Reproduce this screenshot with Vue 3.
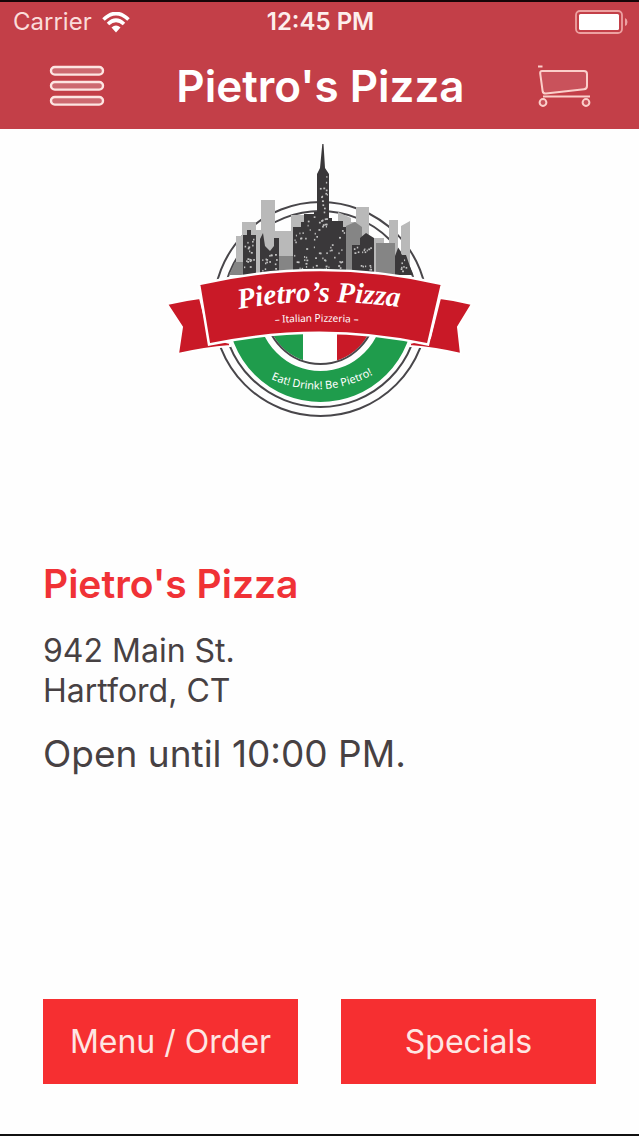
<template>
  <div class="screen">
    <header class="header">
      <div class="status">
        <div class="carrier">
          <span>Carrier</span>
          <svg class="wifi" viewBox="0 0 28 21" aria-hidden="true">
            <path d="M1.5 7.5 Q14 -4.5 26.5 7.5" fill="none" stroke="#fff" stroke-width="3.6" />
            <path d="M6 12 Q14 4.5 22 12" fill="none" stroke="#fff" stroke-width="3.6" />
            <path d="M9.5 15.6 Q14 11.6 18.5 15.6 L14 20.5 Z" fill="#fff" />
          </svg>
        </div>
        <span class="time">12:45 PM</span>
        <svg class="battery" viewBox="0 0 53 24" aria-hidden="true">
          <rect x="1" y="1" width="46" height="22" rx="4" fill="none" stroke="#eda1a1" stroke-width="1.8" />
          <rect x="4" y="4" width="40" height="16" rx="1.5" fill="#fff" />
          <path d="M50 8 Q52.5 9 52.5 12 Q52.5 15 50 16 Z" fill="#eda1a1" />
        </svg>
      </div>
      <nav class="bar">
        <button class="icon-btn" type="button" aria-label="Menu">
          <svg viewBox="0 0 56 42" width="56" height="42">
            <rect v-for="y in [2, 17, 32]" :key="y" x="2" :y="y" width="52" height="7.6" rx="3.8" />
          </svg>
        </button>
        <h1>{{ shop.name }}</h1>
        <button class="icon-btn" type="button" aria-label="Cart">
          <svg class="cart" viewBox="0 0 56 44" width="56" height="44">
            <path d="M2 2.5 H6.5" />
            <path d="M6 7 H48 Q51 7 51 10 V22 Q51 25 48 25.3 L10 29.5 Q7 29.8 6.6 27 L4.2 9.5 Q4 7 6 7 Z" />
            <path d="M7 32.5 H54" />
            <circle cx="7" cy="38.5" r="3.4" />
            <circle cx="50" cy="38.5" r="3.4" />
          </svg>
        </button>
      </nav>
    </header>

    <main class="content">
      <svg class="logo" viewBox="160 140 320 280" role="img" aria-label="Pietro's Pizza logo">
        <defs>
          <clipPath id="flagClip"><circle cx="320.5" cy="309" r="54" /></clipPath>
          <clipPath id="lower"><rect x="200" y="310" width="240" height="110" /></clipPath>
          <path id="nameArc" d="M239 309 Q320 294 420 310" />
          <path id="subArc" d="M275 323 Q320 320 385 324" />
          <path id="mottoArc" d="M271 379 Q322 402 374 374 L390 364" />
        </defs>

        <g class="rings">
          <circle cx="320.5" cy="309" r="107" />
          <circle cx="320.5" cy="309" r="98" />
        </g>

        <!-- skyline -->
        <path class="far" d="M236 275 V236 H242 V222 H256 V230 H261 V200 H275 V231 H291 V215 H304 V275 Z" />
        <path class="far" d="M338 275 V212 L351 218 V222 H356 V207 H369 V238 H384 V243 H389 V220 H398 V262 H401 V226 L410 221 V275 Z" />
        <path class="mid" d="M229 275 L235 262 H243 V275 Z M278 275 V256 H294 V275 Z M346 275 V226 L355 222 L362 227 V275 Z M376 275 V243 H395 V275 Z" />
        <path class="near" d="M243 275 V235 H247 V230 H251 V235 H256 V275 Z M260 275 V239 L263 233 L265 246 L270 251 L274 246 V238 H279 V275 Z" />
        <path class="near" d="M293 275 V227 H301 V222 H304 V214 H314 V212 H317 V174 L320 168 L322.3 144 L323.5 144 L325 168 L329 174 V218 H332 V221 H343 V227 H346 V275 Z" />
        <path class="near" d="M352 275 V245 H360 V238 L366 233 L374 238 V275 Z M395 275 V256 L398 248 L402 255 H406 L413 275 Z" />
        <g fill="#c4c4c4">
          <rect v-for="(w, i) in windows" :key="i" :x="w.x" :y="w.y" :width="w.s" height="1.7" />
        </g>

        <!-- plate with the flag -->
        <circle class="plate" cx="320.5" cy="309" r="77.5" clip-path="url(#lower)" />
        <g clip-path="url(#flagClip)">
          <rect x="262" y="315" width="41" height="60" fill="#1f9c4c" />
          <rect x="303" y="315" width="34" height="60" fill="#fff" />
          <rect x="337" y="315" width="42" height="60" fill="#c91927" />
        </g>
        <circle class="ring" cx="320.5" cy="309" r="55" clip-path="url(#lower)" />

        <!-- ribbon -->
        <path class="tail" d="M167 304 Q184 300 200 298 L210 338 L230 343 L230 346 Q204 348 178 354 L182 327 Z" />
        <path class="tail" d="M472 304 Q457 300 440 298 L430 338 L410 343 L410 346 Q436 348 461 354 L458 327 Z" />
        <path class="ribbon" d="M199 284 Q320 256 442 284 L428 344.5 Q320 321 209 344.5 Z" />

        <text class="name"><textPath href="#nameArc">Pietro’s Pizza</textPath></text>
        <text class="sub"><textPath href="#subArc">– Italian Pizzeria –</textPath></text>
        <text class="motto"><textPath href="#mottoArc">Eat! Drink! Be Pietro!</textPath></text>
      </svg>

      <section class="info">
        <h2>{{ shop.name }}</h2>
        <address>
          {{ shop.street }}<br />
          {{ shop.city }}
        </address>
        <p class="hours">{{ shop.hours }}</p>
      </section>

      <div class="actions">
        <button v-for="action in actions" :key="action" class="action" type="button">{{ action }}</button>
      </div>
    </main>
  </div>
</template>

<script setup>
const shop = {
  name: "Pietro's Pizza",
  street: '942 Main St.',
  city: 'Hartford, CT',
  hours: 'Open until 10:00 PM.'
}

const actions = ['Menu / Order', 'Specials']

// lit windows: [left, top, width, height, count] for each dark building
const buildings = [
  [244, 237, 10, 32, 18],
  [261, 252, 16, 18, 15],
  [294, 229, 50, 42, 55],
  [318, 176, 9, 50, 18],
  [305, 216, 22, 14, 8],
  [353, 246, 19, 24, 18],
  [396, 257, 10, 14, 7]
]

let seed = 7
const random = () => {
  seed = (seed * 16807) % 2147483647
  return seed / 2147483647
}

const windows = buildings.flatMap(([x, y, w, h, count]) =>
  Array.from({ length: count }, () => ({
    x: x + random() * w,
    y: y + random() * h,
    s: 1 + random()
  }))
)
</script>

<style>
body {
  margin: 0;
  background: #fefefe;
}
</style>

<style scoped>
.screen {
  display: flex;
  flex-direction: column;
  box-sizing: border-box;
  min-height: 100vh;
  border-top: 2px solid #150507;
  border-bottom: 2px solid #111;
  font-family: Inter, "Liberation Sans", sans-serif;
  color: #474143;
}

.header {
  background: #c33f48;
  color: #fff;
}

.status {
  display: grid;
  grid-template-columns: 1fr auto 1fr;
  align-items: center;
  height: 40px;
  padding: 0 11px 0 13px;
  font-size: 24px;
  line-height: 28px;
}

.carrier {
  display: flex;
  align-items: center;
  gap: 10px;
  color: #fbdcda;
}

.wifi {
  width: 28px;
  height: 21px;
}

.time {
  font-weight: 600;
  color: #fdeeec;
}

.battery {
  width: 53px;
  height: 24px;
  justify-self: end;
}

.bar {
  display: flex;
  align-items: center;
  justify-content: space-between;
  height: 87px;
  padding: 0 47px 0 49px;
}

h1 {
  margin: 0;
  font-size: 44px;
  font-weight: 600;
  line-height: 54px;
}

.icon-btn {
  display: flex;
  padding: 0;
  border: none;
  background: none;
  cursor: pointer;
}

.icon-btn svg {
  fill: #cd6970;
  stroke: #fde5e2;
  stroke-width: 2.4;
}

.icon-btn .cart {
  fill: #c9525b;
  stroke: #fbcfca;
  stroke-width: 2;
}

.content {
  display: flex;
  flex: 1;
  flex-direction: column;
  padding: 11px 43px 50px;
}

.logo {
  width: 320px;
  height: 280px;
  align-self: center;
}

.rings circle,
.ring {
  fill: none;
  stroke: #48464a;
  stroke-width: 2;
}

.plate {
  fill: none;
  stroke: #1f9c4c;
  stroke-width: 31;
}

.far {
  fill: #b9b9b9;
}

.mid {
  fill: #858585;
}

.near {
  fill: #3a383a;
}

.tail {
  fill: #c91927;
  stroke: #fff;
  stroke-width: 2;
}

.ribbon {
  fill: #c91927;
  stroke: #fff;
  stroke-width: 2.5;
}

.logo text {
  fill: #fff;
}

.name {
  font-family: "Liberation Serif", cursive;
  font-size: 29px;
  font-style: italic;
  font-weight: 700;
}

.sub {
  font-family: "Noto Sans", sans-serif;
  font-size: 10px;
}

.motto {
  font-family: "Noto Sans", sans-serif;
  font-size: 11px;
}

.info {
  margin-top: 138px;
}

h2 {
  margin: 0;
  font-size: 39px;
  font-weight: 600;
  line-height: 52px;
  color: #f03236;
}

address {
  margin-top: 21px;
  font-size: 32px;
  font-style: normal;
  line-height: 40px;
}

.hours {
  margin: 19px 0 0;
  font-size: 37px;
  line-height: 48px;
}

.actions {
  display: grid;
  grid-template-columns: 1fr 1fr;
  gap: 43px;
  margin-top: auto;
}

.action {
  height: 85px;
  padding: 0;
  border: none;
  background: #f62f31;
  color: #fee6e3;
  font-family: inherit;
  font-size: 32px;
  cursor: pointer;
}
</style>
